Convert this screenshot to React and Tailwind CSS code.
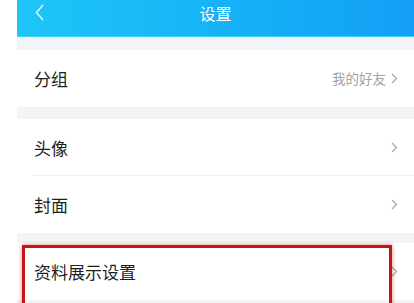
import React from 'react';

const font = { fontFamily: '"Noto Sans CJK SC", "Noto Sans", sans-serif' };

function Chevron({ className = '' }) {
  return (
    <svg width="7" height="11" viewBox="0 0 7 11" className={className}>
      <path d="M1 1 L5.5 5.5 L1 10" fill="none" stroke="#a8a8a8" strokeWidth="1.3" />
    </svg>
  );
}

function Row({ label, value, divider }) {
  return (
    <div className="relative h-[57px] bg-white flex items-center pl-[17px] pr-[16px]">
      <span className="text-[17px] text-[#1f1f1f] leading-none">{label}</span>
      <div className="ml-auto flex items-center gap-[5px]">
        {value && <span className="text-[13.5px] text-[#a3a3a3] leading-none">{value}</span>}
        <Chevron />
      </div>
      {divider && <div className="absolute bottom-0 left-[15px] right-0 h-px bg-[#eeeeee]" />}
    </div>
  );
}

export default function App() {
  return (
    <div className="w-[414px] h-[303px] overflow-hidden bg-white flex" style={font}>
      <div className="w-[17px] shrink-0 bg-white" />
      <div className="flex-1 flex flex-col bg-[#f3f4f7]">
        {/* header */}
        <div className="relative h-[37px] shrink-0 bg-gradient-to-r from-[#1ec6f7] to-[#139ff6] flex items-center justify-center border-b border-[#3fd3fb]">
          <svg width="9" height="17" viewBox="0 0 9 17" className="absolute left-[18px] top-[4px]">
            <path d="M8 1 L1.5 8.5 L8 16" fill="none" stroke="#d6f4ff" strokeWidth="1.6" />
          </svg>
          <span className="text-[16px] text-white leading-none -mt-[10px]">设置</span>
        </div>

        <div className="h-[13px] shrink-0" />
        <Row label="分组" value="我的好友" />

        <div className="h-[12px] shrink-0" />
        <Row label="头像" divider />
        <Row label="封面" />

        <div className="h-[10px] shrink-0" />
        <div className="relative">
          <Row label="资料展示设置" />
          <div className="absolute left-[5px] top-[2px] w-[370px] h-[80px] border-[3px] border-[#c5161d] shadow-[0_0_4px_rgba(200,30,30,0.6)] pointer-events-none" />
        </div>
      </div>
    </div>
  );
}
